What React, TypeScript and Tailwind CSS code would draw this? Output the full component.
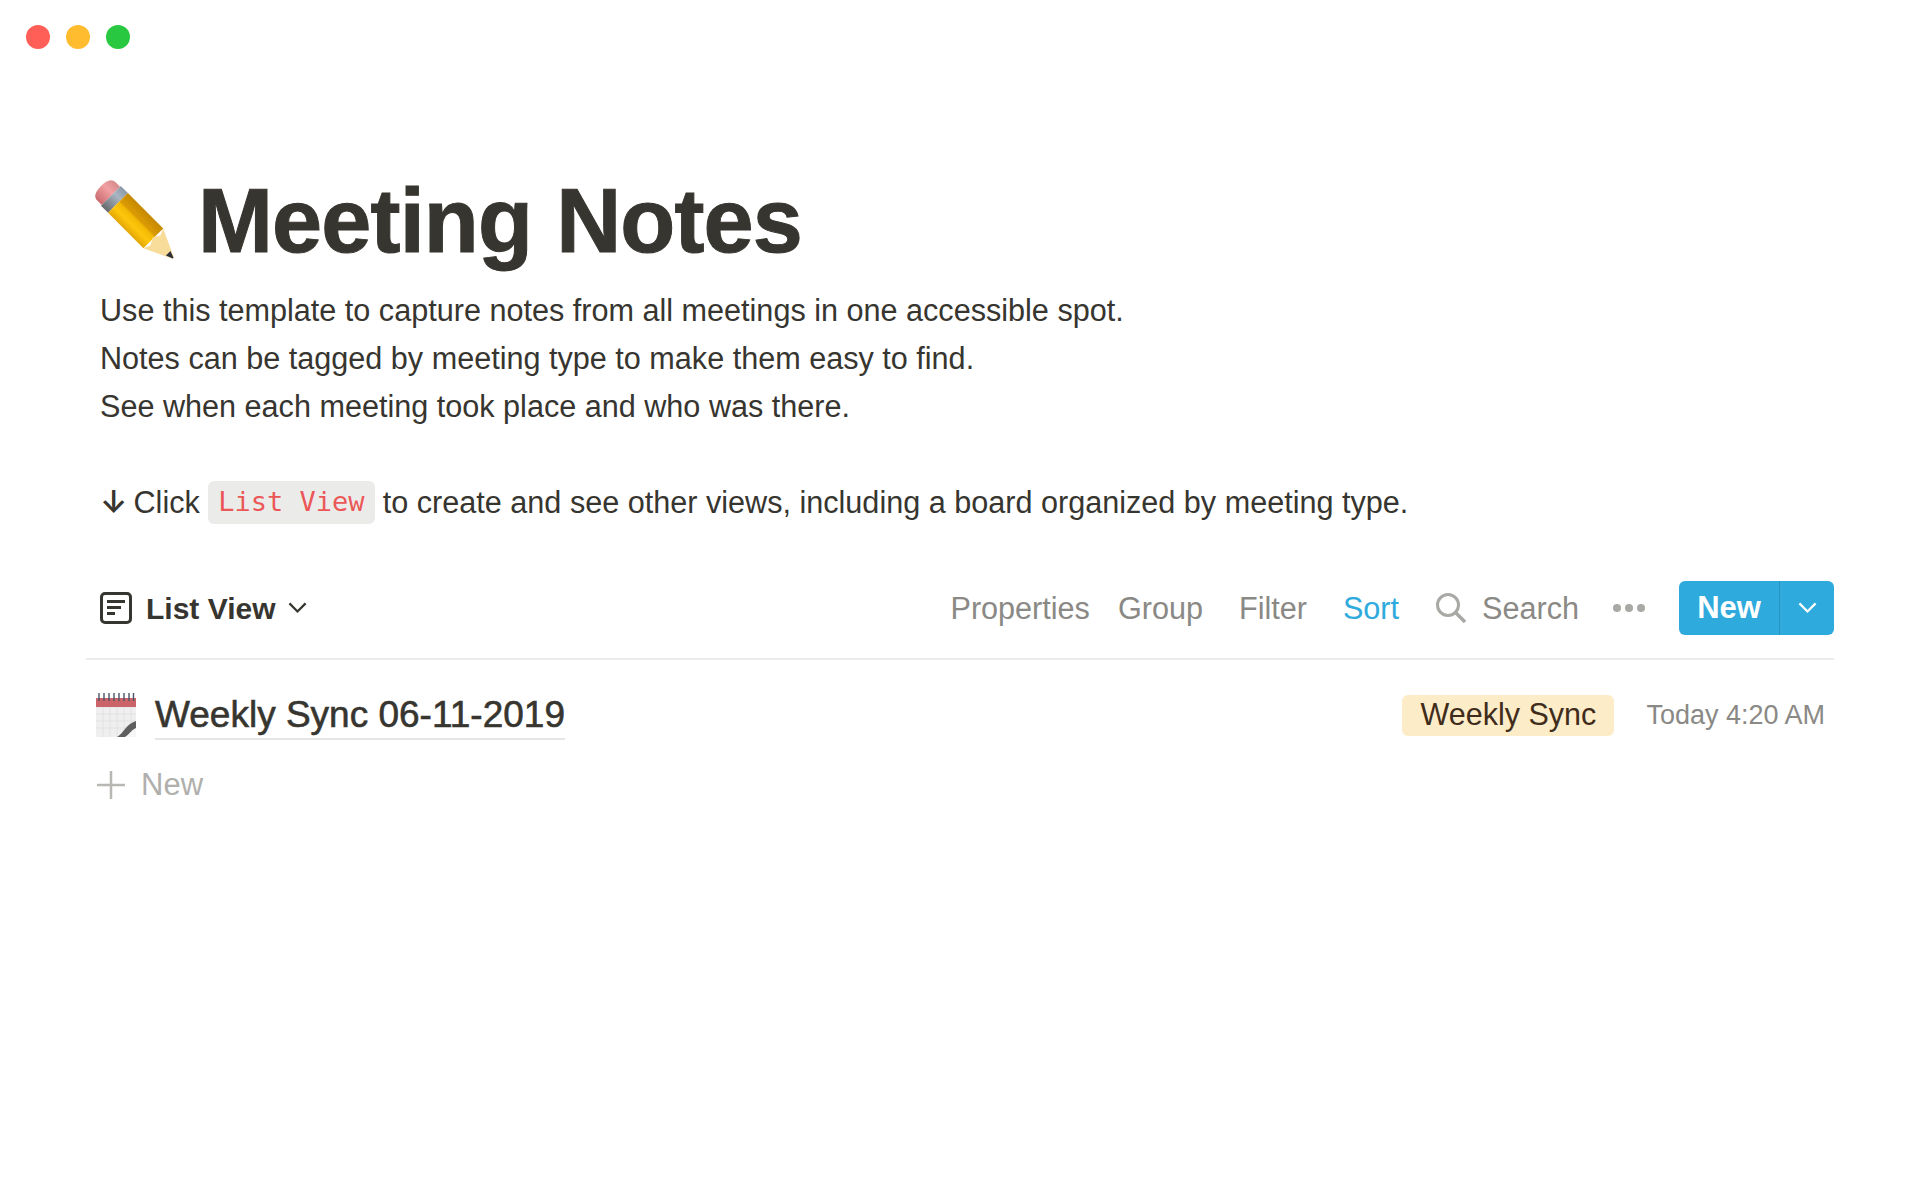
const font = "font-['Liberation_Sans',Arial,sans-serif]"

function PencilEmoji() {
  return (
    <svg width="84" height="84" viewBox="0 0 84 84" className="shrink-0">
      <defs>
        <linearGradient id="body" x1="0" y1="0" x2="1" y2="0">
          <stop offset="0" stopColor="#e3a606" />
          <stop offset="0.3" stopColor="#fdc70c" />
          <stop offset="0.55" stopColor="#f2b705" />
          <stop offset="0.6" stopColor="#dc9c04" />
          <stop offset="1" stopColor="#c48902" />
        </linearGradient>
        <linearGradient id="band" x1="0" y1="0" x2="1" y2="0">
          <stop offset="0" stopColor="#66686b" />
          <stop offset="0.65" stopColor="#a9b6c2" />
          <stop offset="1" stopColor="#8c99a6" />
        </linearGradient>
        <linearGradient id="rubber" x1="0" y1="0" x2="1" y2="0">
          <stop offset="0" stopColor="#c96a70" />
          <stop offset="0.6" stopColor="#f2a0a2" />
          <stop offset="1" stopColor="#d58a8c" />
        </linearGradient>
      </defs>
      <g transform="translate(9 7) rotate(-45)">
        <path d="M-13 14 V8 C-13 2 -8 0 0 0 C8 0 13 2 13 8 V14 Z" fill="url(#rubber)" />
        <rect x="-14" y="14" width="28" height="10" fill="url(#band)" />
        <rect x="-14" y="24" width="28" height="50" fill="url(#body)" />
        <path d="M-14 74 L-7 77 L0 73 L7 77 L14 74 L1 102 L-1 102 Z" fill="#f7dc9a" />
        <path d="M-3.200 95 L3.200 95 L0.500 102 L-0.500 102 Z" fill="#2b2f38" />
      </g>
    </svg>
  )
}

function CalendarEmoji() {
  return (
    <svg width="42" height="44" viewBox="0 0 42 44" className="shrink-0">
      <rect x="1" y="5" width="40" height="39" fill="#efefef" />
      <path d="M1 14H41M1 21H41M1 28H41M1 35H41M8 14V44M15 14V44M22 14V44M29 14V44M36 14V44" stroke="#e2e2e2" strokeWidth="1" />
      <rect x="1" y="5" width="40" height="9" fill="#cb6469" />
      <path d="M4 0V8M9 0V8M14 0V8M19 0V8M24 0V8M29 0V8M34 0V8M38.500 0V8" stroke="#4a5568" strokeWidth="1.400" />
      <path d="M22 44 C28 41 31 31 41 28 V44 Z" fill="#5f5f5f" />
      <path d="M30 44 C34 42 36 37 41 35 V44 Z" fill="#f6f6f6" />
    </svg>
  )
}

function ListViewIcon() {
  return (
    <svg width="32" height="32" viewBox="0 0 32 32" fill="none" className="shrink-0">
      <rect x="1.500" y="1.500" width="29" height="29" rx="3.500" stroke="#37352f" strokeWidth="3" />
      <path d="M7 9.500H25M7 15.500H21M7 21.500H15" stroke="#37352f" strokeWidth="3" />
    </svg>
  )
}

function Chevron({ color, size }: { color: string; size: number }) {
  return (
    <svg width={size} height={size * 0.6} viewBox="0 0 20 12" fill="none">
      <path d="M1.500 1.500L10 10L18.500 1.500" stroke={color} strokeWidth="2.400" />
    </svg>
  )
}

export default function App() {
  return (
    <div className={`${font} min-h-[1200px] bg-white text-[#37352f]`}>
      <div className="flex gap-4 pl-[26px] pt-[25px]">
        <span className="h-6 w-6 rounded-full bg-[#ff5f57]" />
        <span className="h-6 w-6 rounded-full bg-[#febc2e]" />
        <span className="h-6 w-6 rounded-full bg-[#28c840]" />
      </div>

      <div className="mt-[122px] flex items-center pl-[92px]">
        <PencilEmoji />
        <h1 className="ml-[22px] text-[90px] leading-[100px] font-bold tracking-[-0.850px] [-webkit-text-stroke:1px_#37352f]">
          Meeting Notes
        </h1>
      </div>

      <div className="mt-[15px] pl-[100px] text-[30.600px] leading-[48px]">
        <p>Use this template to capture notes from all meetings in one accessible spot.</p>
        <p>Notes can be tagged by meeting type to make them easy to find.</p>
        <p>See when each meeting took place and who was there.</p>
        <p className="mt-[48px] flex items-center">
          <span className="w-[33.500px] font-['Inter',sans-serif] text-[31px] font-semibold">↓</span>
          <span>Click</span>
          <code className="mx-2 flex h-[43px] w-[167px] items-center justify-center rounded-md bg-[#ebecea] font-['DejaVu_Sans_Mono',monospace] text-[27px] text-[#eb5757]">
            List View
          </code>
          <span>to create and see other views, including a board organized by meeting type.</span>
        </p>
      </div>

      <div className="mx-[86px] mt-[56px] flex h-[78px] items-center justify-between border-b-2 border-[#ebebea] pb-[24px]">
        <div className="flex items-center pl-[14px]">
          <ListViewIcon />
          <span className="ml-[14px] text-[30px] font-bold">List View</span>
          <span className="ml-[12px]">
            <Chevron color="#37352f" size={19} />
          </span>
        </div>
        <div className="flex items-center text-[30.600px] text-[#8a8985]">
          <span className="pt-[2px]">Properties</span>
          <span className="ml-[28px] pt-[2px]">Group</span>
          <span className="ml-[36px] pt-[2px]">Filter</span>
          <span className="ml-[36px] pt-[2px] text-[#2eaadc]">Sort</span>
          <svg width="32" height="32" viewBox="0 0 32 32" fill="none" className="ml-[36px]">
            <circle cx="13" cy="13" r="10.500" stroke="#a9a8a5" strokeWidth="3" />
            <path d="M21 21L30 30" stroke="#a9a8a5" strokeWidth="3.500" />
          </svg>
          <span className="ml-[15px] pt-[2px]">Search</span>
          <span className="ml-[34px] flex gap-[4px]">
            <span className="h-[8px] w-[8px] rounded-full bg-[#a9a8a5]" />
            <span className="h-[8px] w-[8px] rounded-full bg-[#a9a8a5]" />
            <span className="h-[8px] w-[8px] rounded-full bg-[#a9a8a5]" />
          </span>
          <div className="ml-[34px] flex h-[54px] w-[155px] rounded-md bg-[#2eaadc] text-white">
            <span className="flex w-[101px] items-center justify-center border-r border-[#2a93bd] text-[31px] font-bold">
              New
            </span>
            <span className="flex flex-1 items-center justify-center">
              <Chevron color="#ffffff" size={19} />
            </span>
          </div>
        </div>
      </div>

      <div className="mx-[86px] mt-[30px] flex items-center justify-between pl-[9px] pr-[9px]">
        <div className="flex items-center">
          <CalendarEmoji />
          <span className="ml-[18px] border-b-2 border-[#e6e6e5] pt-px text-[37px] leading-[47px] [-webkit-text-stroke:0.6px_#37352f]">
            Weekly Sync 06-11-2019
          </span>
        </div>
        <div className="flex items-center">
          <span className="flex h-[41px] w-[212px] items-center justify-center rounded-md bg-[#fdecc8] text-[30.500px] text-[#402c1b]">
            Weekly Sync
          </span>
          <span className="ml-[32px] text-[27px] text-[#8a8985]">Today 4:20 AM</span>
        </div>
      </div>

      <div className="mt-[22px] flex items-center pl-[97px] text-[31px] text-[#b0afac]">
        <svg width="28" height="28" viewBox="0 0 28 28" fill="none">
          <path d="M14 0V28M0 14H28" stroke="#b8b7b4" strokeWidth="2.500" />
        </svg>
        <span className="ml-[16px]">New</span>
      </div>
    </div>
  )
}
